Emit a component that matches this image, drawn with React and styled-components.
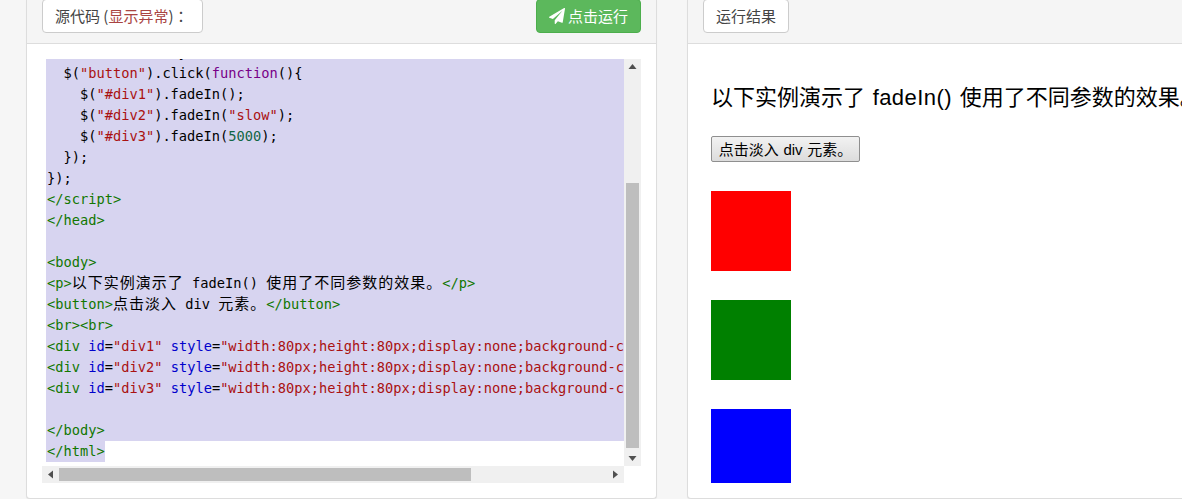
import React from 'react';
import styled, { createGlobalStyle } from 'styled-components';

const GlobalStyle = createGlobalStyle`
    html, body {
        margin: 0;
        padding: 0;
        background: #f6f6f6;
    }
`;

const Page = styled.div`
    display: flex;
    gap: 30px;
    width: 1182px;
    height: 499px;
    padding-left: 26px;
    box-sizing: border-box;
    overflow: hidden;
    font-family: 'Noto Sans CJK SC', 'Liberation Sans', sans-serif;
`;

const Panel = styled.section`
    flex: 0 0 631px;
    height: 499px;
    box-sizing: border-box;
    background: #fff;
    border: 1px solid #ddd;
    border-top: none;
    border-radius: 0 0 4px 4px;
    box-shadow: 0 1px 1px rgba(0, 0, 0, 0.05);
    overflow: hidden;
`;

const PanelHeader = styled.header`
    display: flex;
    justify-content: space-between;
    align-items: flex-start;
    height: 44px;
    box-sizing: border-box;
    padding: 0 15px;
    background: #f5f5f5;
    border-bottom: 1px solid #ddd;
`;

const HeaderButton = styled.button`
    display: flex;
    align-items: center;
    gap: 3px;
    width: ${props => props.$width || 'auto'};
    height: 34px;
    margin-top: -1px;
    padding: 0 12px;
    box-sizing: border-box;
    border: 1px solid ${props => (props.$primary ? '#4cae4c' : '#ccc')};
    border-radius: 4px;
    background: ${props => (props.$primary ? '#5cb85c' : '#fff')};
    color: ${props => (props.$primary ? '#fff' : '#444')};
    font-family: inherit;
    font-size: 15px;
    line-height: 20px;
    white-space: pre;
`;

const ErrorLabel = styled.span`
    color: #a94442;
`;

const Colon = styled.span`
    font-family: 'Noto Sans CJK TC', sans-serif;
`;

const PlaneIcon = styled.svg`
    width: 16px;
    height: 16px;
    fill: #fff;
`;

const SourceBody = styled.div`
    padding: 15px;
`;

const Editor = styled.div`
    display: grid;
    grid-template-columns: 582px 17px;
    grid-template-rows: 407px 17px;
`;

const CodeArea = styled.div`
    overflow: hidden;
    padding-left: 4px;
    background: #fff;
`;

const CodeInner = styled.div`
    margin-top: -17px;
    font-family: 'DejaVu Sans Mono', 'Noto Sans CJK SC', monospace;
    font-size: 13.7px;
    color: #000;
`;

const Line = styled.div`
    height: 21px;
    line-height: 21px;
    padding-left: 1px;
    white-space: pre;
    background: #d7d4f0;
    width: ${props => (props.$last ? 'fit-content' : 'auto')};
`;

const tokenColors = {
    tag: '#117700',
    str: '#aa1111',
    kw: '#770088',
    attr: '#0000cc',
    num: '#116644',
};

const Token = styled.span`
    color: ${props => tokenColors[props.$kind]};
`;

const Han = styled.span`
    font-family: 'Noto Sans CJK SC', sans-serif;
    font-size: 15px;
    line-height: 1;
    letter-spacing: 1px;
`;

const ScrollTrack = styled.div`
    display: flex;
    flex-direction: ${props => (props.$vertical ? 'column' : 'row')};
    align-items: center;
    background: #f0f0f0;
`;

const ScrollArrow = styled.svg`
    flex: none;
    width: 17px;
    height: 17px;
    fill: #505050;
`;

const VerticalGap = styled.div`
    flex: none;
    height: 107px;
`;

const VerticalThumb = styled.div`
    flex: none;
    width: 13px;
    height: 265px;
    background: #bebebe;
`;

const ScrollRest = styled.div`
    flex: 1;
`;

const HorizontalThumb = styled.div`
    flex: none;
    width: 412px;
    height: 13px;
    background: #bebebe;
`;

const ResultFrame = styled.div`
    height: 439px;
    padding-left: 23px;
    overflow: hidden;
    color: #000;
`;

const ResultText = styled.p`
    margin: 0;
    padding-top: 37px;
    height: 55px;
    line-height: 33px;
    font-size: 22px;
    font-family: 'Liberation Sans', 'Noto Sans CJK SC', sans-serif;
    white-space: nowrap;
    word-spacing: 1.5px;
`;

const LatinRun = styled.span`
    letter-spacing: 0.45px;
`;

const DemoButton = styled.button`
    display: block;
    width: 149px;
    height: 26px;
    margin: 0 0 29px;
    padding: 1px 0 0;
    box-sizing: border-box;
    border: 1px solid #8f8f8f;
    border-radius: 2px;
    background: linear-gradient(#f2f2f2, #dcdcdc);
    color: #000;
    font-family: 'Liberation Sans', 'Noto Sans CJK SC', sans-serif;
    font-size: 15px;
    line-height: 22px;
    white-space: nowrap;
    word-spacing: 0.5px;
`;

const Square = styled.div`
    width: 80px;
    height: 80px;
    margin-bottom: 29px;
    background: ${props => props.$color};
`;

const T = ({ children }) => <Token $kind="tag">{children}</Token>;
const S = ({ children }) => <Token $kind="str">{children}</Token>;
const A = ({ children }) => <Token $kind="attr">{children}</Token>;

const divLine = (id, color) => (
    <>
        <T>&lt;div</T> <A>id</A>=<S>"{id}"</S> <A>style</A>=<S>"width:80px;height:80px;display:none;background-color:{color};"</S><T>&gt;&lt;/div&gt;</T>
    </>
);

const codeLines = [
    <>$(document).ready(<Token $kind="kw">function</Token>(){'{'}</>,
    <>  $(<S>"button"</S>).click(<Token $kind="kw">function</Token>(){'{'}</>,
    <>    $(<S>"#div1"</S>).fadeIn();</>,
    <>    $(<S>"#div2"</S>).fadeIn(<S>"slow"</S>);</>,
    <>    $(<S>"#div3"</S>).fadeIn(<Token $kind="num">5000</Token>);</>,
    <>  {'}'});</>,
    <>{'}'});</>,
    <T>&lt;/script&gt;</T>,
    <T>&lt;/head&gt;</T>,
    ' ',
    <T>&lt;body&gt;</T>,
    <><T>&lt;p&gt;</T><Han>以下实例演示了</Han> fadeIn() <Han>使用了不同参数的效果。</Han><T>&lt;/p&gt;</T></>,
    <><T>&lt;button&gt;</T><Han>点击淡入</Han> div <Han>元素。</Han><T>&lt;/button&gt;</T></>,
    <T>&lt;br&gt;&lt;br&gt;</T>,
    divLine('div1', 'red'),
    divLine('div2', 'green'),
    divLine('div3', 'blue'),
    ' ',
    <T>&lt;/body&gt;</T>,
    <T>&lt;/html&gt;</T>,
];

export default function App() {
    return (
        <>
            <GlobalStyle />
            <Page>
                <Panel>
                    <PanelHeader>
                        <HeaderButton $width="161px">
                            <span>源代码 (<ErrorLabel>显示异常</ErrorLabel>)<Colon>：</Colon></span>
                        </HeaderButton>
                        <HeaderButton $primary>
                            <PlaneIcon viewBox="0 0 1792 1792">
                                <path d="M1764 11q33 24 27 64l-256 1536q-5 29-32 45-14 8-31 8-11 0-24-5l-453-185-242 295q-18 23-49 23-13 0-22-4-19-7-30.5-23.5t-11.5-36.5v-349l864-1059-1069 925-395-162q-37-14-40-55-2-40 32-59l1664-960q15-9 32-9 20 0 36 11z" />
                            </PlaneIcon>
                            点击运行
                        </HeaderButton>
                    </PanelHeader>
                    <SourceBody>
                        <Editor>
                            <CodeArea>
                                <CodeInner>
                                    {codeLines.map((line, i) => (
                                        <Line key={i} $last={i === codeLines.length - 1}>{line}</Line>
                                    ))}
                                </CodeInner>
                            </CodeArea>
                            <ScrollTrack $vertical>
                                <ScrollArrow viewBox="0 0 17 17"><path d="M8.5 5 L12.5 10 L4.5 10 Z" /></ScrollArrow>
                                <VerticalGap />
                                <VerticalThumb />
                                <ScrollRest />
                                <ScrollArrow viewBox="0 0 17 17"><path d="M4.5 7 L12.5 7 L8.5 12 Z" /></ScrollArrow>
                            </ScrollTrack>
                            <ScrollTrack>
                                <ScrollArrow viewBox="0 0 17 17"><path d="M6 8.5 L11 4.5 L11 12.5 Z" /></ScrollArrow>
                                <HorizontalThumb />
                                <ScrollRest />
                                <ScrollArrow viewBox="0 0 17 17"><path d="M6 4.5 L11 8.5 L6 12.5 Z" /></ScrollArrow>
                            </ScrollTrack>
                        </Editor>
                    </SourceBody>
                </Panel>
                <Panel>
                    <PanelHeader>
                        <HeaderButton>运行结果</HeaderButton>
                    </PanelHeader>
                    <ResultFrame>
                        <ResultText>以下实例演示了 <LatinRun>fadeIn()</LatinRun> 使用了不同参数的效果。</ResultText>
                        <DemoButton>点击淡入 div 元素。</DemoButton>
                        <Square $color="#f00" />
                        <Square $color="#008000" />
                        <Square $color="#00f" />
                    </ResultFrame>
                </Panel>
            </Page>
        </>
    );
}
